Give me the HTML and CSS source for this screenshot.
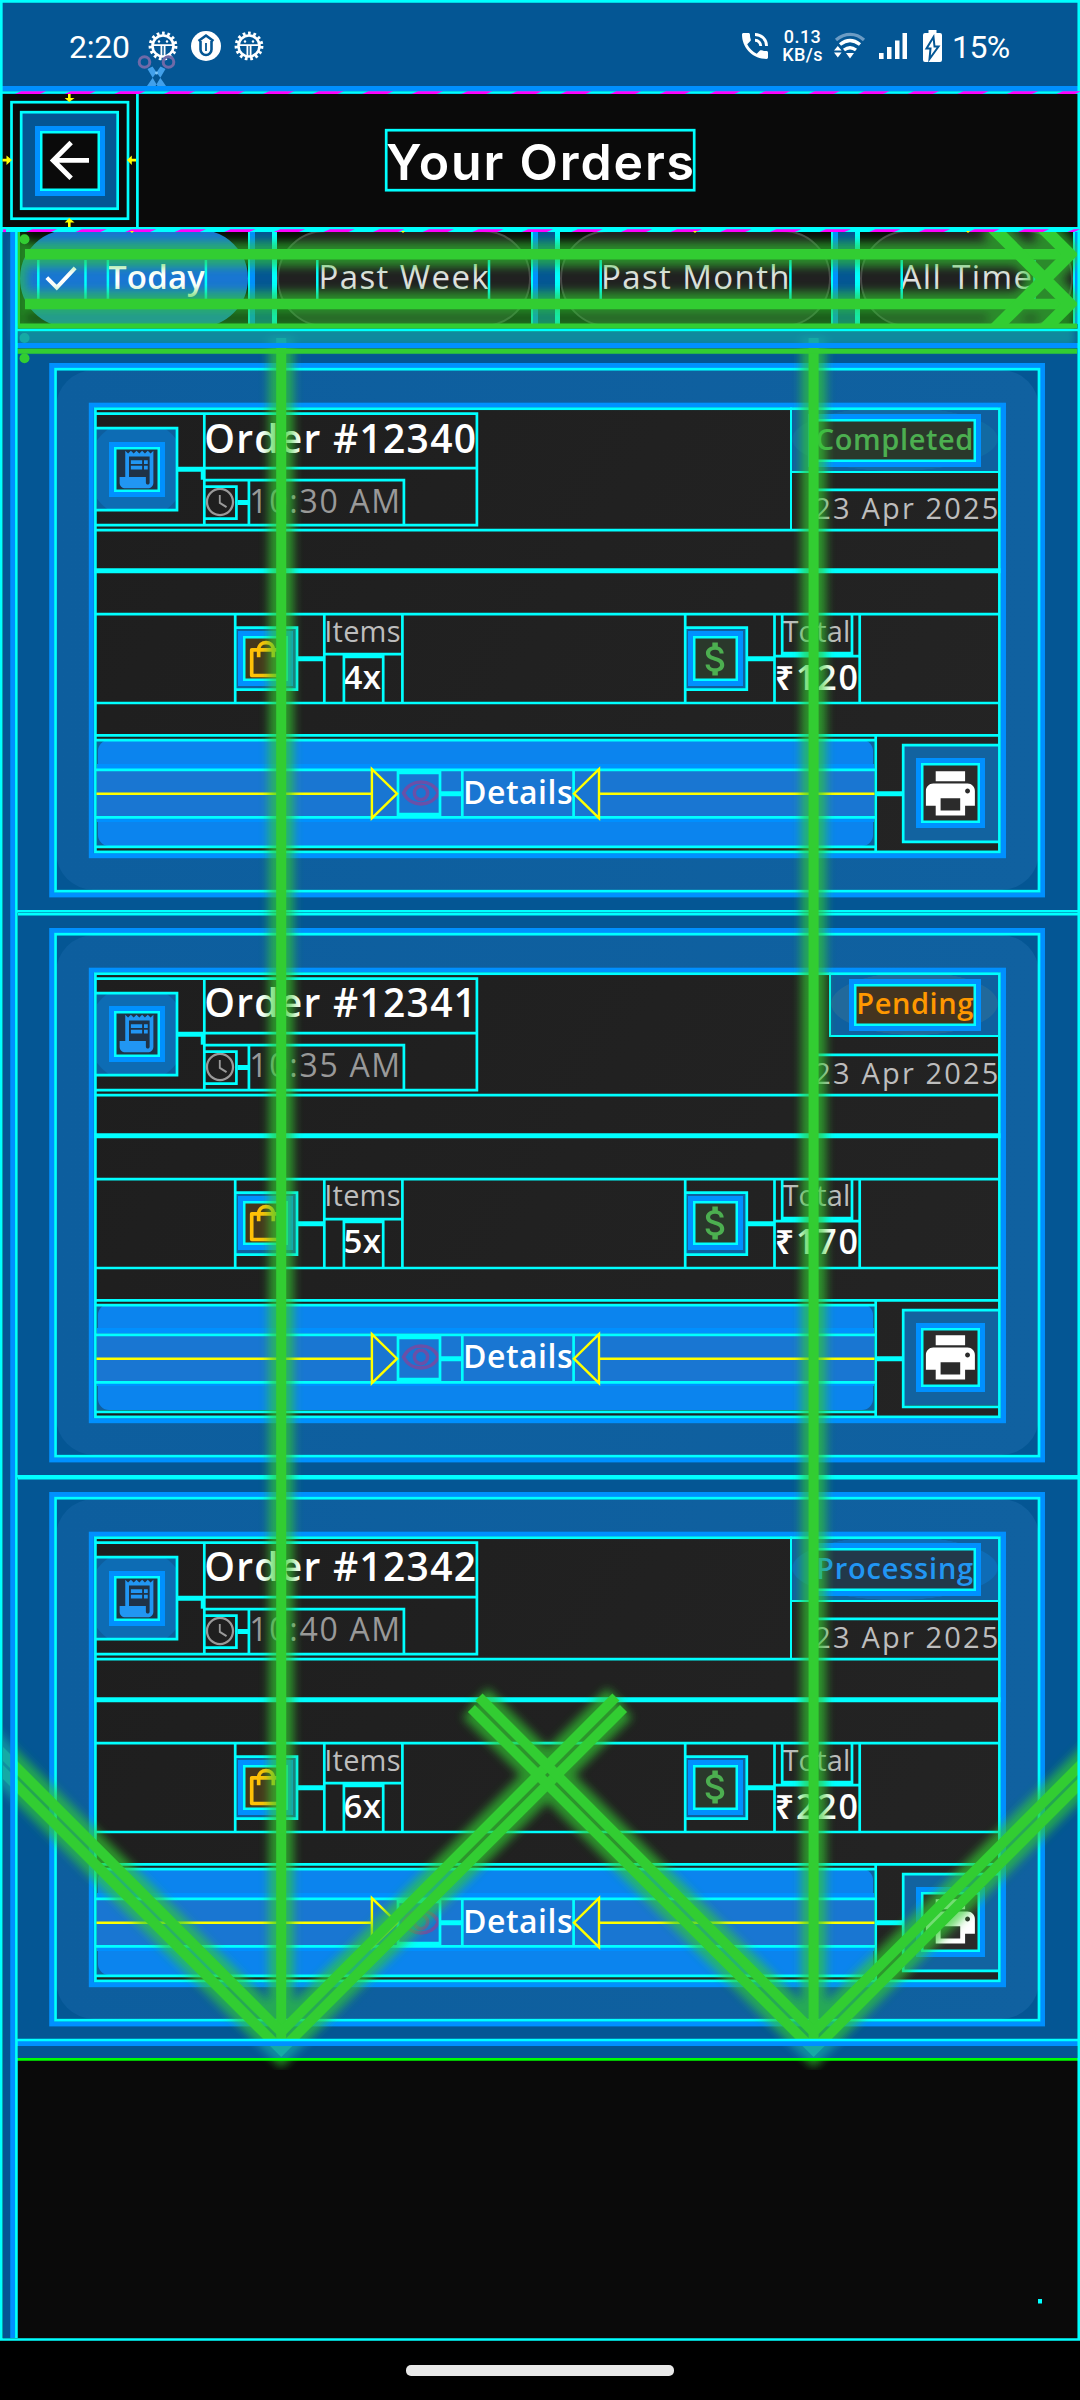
FILE: index.html
```html
<!DOCTYPE html>
<html lang="en">
<head>
<meta charset="utf-8">
<title>Your Orders</title>
<link rel="stylesheet" href="styles.css">
</head>
<body>
<svg class="defs" width="0" height="0">
  <defs>
    <symbol id="i-receipt" viewBox="0 0 24 24"><path fill="#2196f3" d="M19.500 3.500 18 2l-1.500 1.500L15 2l-1.500 1.500L12 2l-1.500 1.500L9 2 7.500 3.500 6 2v14H3v3c0 1.660 1.340 3 3 3h12c1.660 0 3-1.340 3-3V2l-1.500 1.500zM19 19c0 .55-.45 1-1 1s-1-.45-1-1v-3H8V5h11v14z"/><path fill="#2196f3" d="M9 7h6v2H9zM16 7h2v2h-2zM9 10h6v2H9zM16 10h2v2h-2z"/></symbol>
    <symbol id="i-clock" viewBox="0 0 24 24"><path fill="#9a9a9a" d="M11.990 2C6.470 2 2 6.480 2 12s4.470 10 9.990 10C17.520 22 22 17.520 22 12S17.520 2 11.990 2zM12 20.400c-4.640 0-8.400-3.760-8.400-8.400s3.760-8.400 8.400-8.400 8.400 3.760 8.400 8.400-3.760 8.400-8.400 8.400z"/><path fill="#9a9a9a" d="M12.500 7H11.200v6l5.050 3.150.75-1.230-4.500-2.670z"/></symbol>
    <symbol id="i-bag" viewBox="0 0 24 24"><path fill="none" stroke="#ffc107" stroke-width="2" stroke-linejoin="round" d="M4.200 7h15.600v14H4.200z"/><path fill="none" stroke="#ffc107" stroke-width="2" d="M8 11V7c0-5.300 8-5.300 8 0v4"/></symbol>
    <symbol id="i-dollar" viewBox="0 0 24 24"><path fill="#4caf50" d="M11.800 10.900c-2.270-.59-3-1.200-3-2.150 0-1.090 1.010-1.850 2.700-1.850 1.780 0 2.440.85 2.500 2.100h2.210c-.07-1.720-1.120-3.300-3.210-3.810V3h-3v2.160c-1.940.42-3.500 1.680-3.500 3.610 0 2.310 1.910 3.460 4.700 4.130 2.500.6 3 1.480 3 2.410 0 .69-.49 1.790-2.700 1.790-2.060 0-2.870-.92-2.980-2.100h-2.200c.12 2.190 1.760 3.420 3.680 3.830V21h3v-2.150c1.950-.37 3.500-1.500 3.500-3.550 0-2.840-2.430-3.810-4.700-4.400z"/></symbol>
    <symbol id="i-print" viewBox="0 0 24 24"><path fill="#fff" fill-rule="evenodd" d="M19 8H5c-1.660 0-3 1.340-3 3v6h4v4h12v-4h4v-6c0-1.660-1.340-3-3-3zm-3 11H8v-5h8v5zm3-7c-.55 0-1-.45-1-1s.45-1 1-1 1 .45 1 1-.45 1-1 1zm-1-9H6v4h12V3z"/></symbol>
    <symbol id="i-eye" viewBox="0 0 24 24"><path fill="none" stroke="#6a50a8" stroke-width="2" d="M2 12c4-8.300 16-8.300 20 0-4 8.300-16 8.300-20 0z"/><circle cx="12" cy="12" r="3.800" fill="none" stroke="#6a50a8" stroke-width="2"/></symbol>
    <symbol id="i-gear" viewBox="-16 -16 32 32"><circle r="12.600" fill="none" stroke="#fff" stroke-width="3.600" stroke-dasharray="2.650 2.627"/><circle r="10.500" fill="none" stroke="#fff" stroke-width="2.600"/><path d="M-10-.8H10M-1.600 0v10M1.600 0v10" fill="none" stroke="#fff" stroke-width="1.800"/><circle cx="-4" cy="-4.500" r="1.200" fill="#fff"/><circle cx="4" cy="-4.500" r="1.200" fill="#fff"/></symbol>
    <symbol id="card-guides" viewBox="0 348.300 1080 564.400">
      <g fill="none" stroke="#0090ff" stroke-width="5">
        <rect x="51.700" y="365.800" width="990.800" height="529.400"/>
        <rect x="91.300" y="405.500" width="912.200" height="450.500"/>
      </g>
      <g fill="none" stroke="#00ffff" stroke-width="2.700">
        <rect x="55.500" y="369.500" width="983.500" height="522"/>
        <rect x="95.400" y="409" width="904" height="443.200"/>
        <path d="M96 414H476.900V525.500H96M204.300 412.700V525.500M204.300 468.500H476.900M96 530.500H999M204.300 480.500H403.900V525.500M248.900 480.500V525.500M96 428.500H177V510.500H96"/>
        <path d="M204.300 487H236.400V519H204.300M813 490.200H999"/>
        <path d="M96 614.500H999M96 703.300H999M235.200 614.500V703.300M235.200 628H297V690H235.200M324.300 614.500V703.300M402.400 614.500V703.300M343.900 654V703.300M383.200 654V703.300M324.300 654.500H402.400"/>
        <path d="M685.200 614.500V703.300M685.200 628H746.800V690H685.200M774.500 614.500V703.300M859.700 614.500V703.300M782.200 614.500V654.500H852V614.500M774.500 656.500H859.700"/>
        <path d="M96 735.600H999M96 740.500H875.700M875.700 735.600V852M96 847.200H875.700M96 770.200H875.700M96 817.700H875.700M398 770.200V817.700M440 770.200V817.700M462.300 770.200V817.700M573.600 770.200V817.700M999 745.500H903.200V842.200H999"/>
      </g>
      <g fill="none" stroke="#00ffff" stroke-width="5">
        <path d="M178 469.500H203M237.600 502.800H248M94.500 571H1000.500M298 659H323M343 656H384M748 659H774M783 654.500H852M441 794H461.500M877 794H903M17 912.700H1080M398 772H440M398 815.500H440"/>
        <path d="M202 469V480" stroke-width="2.500"/>
      </g>
      <path d="M96.500 794H371.900M371.900 769.500V818.500L397 794ZM599 794H874.500M599 769.500V818.500L574 794Z" fill="none" stroke="#ffff00" stroke-width="2.400"/>
    </symbol>
  </defs>
</svg>

<header class="status">
  <div class="status-left">
    <span class="clock">2:20</span>
    <svg width="32" height="32"><use href="#i-gear"/></svg>
    <svg width="32" height="32" viewBox="-16 -16 32 32"><circle r="15" fill="#fff"/><path d="M-5.500-5V3.500a5.500 5.500 0 0 0 11 0V-5M-7.500-5 0-10.500 7.500-5" fill="none" stroke="#045694" stroke-width="2.600"/><path d="M0-7V5" stroke="#fff" stroke-width="6"/><path d="M0-3V5" stroke="#045694" stroke-width="1.800"/></svg>
    <svg width="32" height="32"><use href="#i-gear"/></svg>
  </div>
  <div class="status-right">
    <svg class="s-phone" width="26" height="26" viewBox="3 3 18 18"><path fill="#fff" d="M20 15.500c-1.250 0-2.450-.2-3.570-.57-.35-.11-.74-.03-1.020.24l-2.200 2.200c-2.830-1.440-5.150-3.750-6.590-6.590l2.200-2.210c.28-.26.36-.65.25-1C8.700 6.450 8.500 5.250 8.500 4c0-.55-.45-1-1-1H4c-.55 0-1 .45-1 1 0 9.390 7.610 17 17 17 .55 0 1-.45 1-1v-3.500c0-.55-.45-1-1-1z"/><path fill="none" stroke="#fff" stroke-width="2" d="M12 4a8 8 0 0 1 8 8M12 8a4 4 0 0 1 4 4"/></svg>
    <div class="speed"><span>0.13</span><span>KB/s</span></div>
    <svg class="s-wifi" width="32" height="28" viewBox="0 0 32 28"><path d="M2 8c9-7.500 20-7.500 28 0" fill="none" stroke="#6b9bc4" stroke-width="3.200"/><path d="M6 12.500c7-5.500 13-5.500 20 0M10 18c4-3 8-3 12 0" fill="none" stroke="#fff" stroke-width="3.400"/><path d="M12 21h8l-4 5.500zM0 18.500h7.600L3.800 14zM0 20.500h7.600L3.800 25.500z" fill="#fff"/></svg>
    <svg class="s-signal" width="28" height="26" viewBox="0 0 28 26"><path d="M0 20h4.600v6H0zM8 14h4.500v12H8zM16 7.500h4.500V26H16zM23.500 0H28v26h-4.500z" fill="#fff"/></svg>
    <svg class="s-batt" width="19" height="32" viewBox="0 0 19 32"><path d="M5.500 0h8v3H17a2 2 0 0 1 2 2v25a2 2 0 0 1-2 2H2a2 2 0 0 1-2-2V5a2 2 0 0 1 2-2h3.500z" fill="#fff"/><path d="M10.500 7 3.500 18.500h4L6.500 29l9-12.500h-4z" fill="#fff" stroke="#045694" stroke-width="2"/></svg>
    <span class="clock percent">15%</span>
  </div>
</header>

<div class="appbar">
  <div class="leading">
    <button class="back" aria-label="Back"><span class="frame back-icon"><svg width="58.800" height="58.800" viewBox="0 0 24 24"><path fill="#fff" d="M20 11H7.830l5.590-5.590L12 4l-8 8 8 8 1.410-1.410L7.830 13H20v-2z"/></svg></span></button>
  </div>
  <h1>Your Orders</h1>
</div>

<nav class="chips">
  <div class="chip-cell c1"><div class="chip active"><svg width="34" height="34" viewBox="0 0 24 24"><path fill="none" stroke="#fff" stroke-width="2.800" d="M2 12.500 9 19.500 22 5.500"/></svg><span>Today</span></div></div>
  <div class="chip-cell c2"><div class="chip"><span>Past Week</span></div></div>
  <div class="chip-cell c3"><div class="chip"><span>Past Month</span></div></div>
  <div class="chip-cell c4"><div class="chip"><span>All Time</span></div></div>
</nav>

<main class="list">
  <section class="item">
    <article class="card"><div class="inner">
      <div class="head">
        <div class="receipt"><span class="frame"><svg width="45" height="45"><use href="#i-receipt"/></svg></span></div>
        <div class="meta"><h2>Order #12340</h2><p class="time"><svg width="34" height="34"><use href="#i-clock"/></svg><span>10:30 AM</span></p></div>
        <div class="side wide"><div class="badge done"><b class="frame"><span>Completed</span></b></div><p class="date">23 Apr 2025</p></div>
      </div>
      <div class="stats">
        <div class="stat items"><span class="tile"><i class="frame bag"><svg width="44" height="44"><use href="#i-bag"/></svg></i></span><div><small>Items</small><strong>4x</strong></div></div>
        <div class="stat total"><span class="tile"><i class="frame cash"><svg width="44" height="44"><use href="#i-dollar"/></svg></i></span><div><small>Total</small><strong>₹120</strong></div></div>
      </div>
      <div class="actions"><button class="details"><span><svg width="42" height="42"><use href="#i-eye"/></svg><em>Details</em></span></button><div class="print"><span class="frame"><svg width="58.800" height="58.800"><use href="#i-print"/></svg></span></div></div>
    </div></article>
    <svg class="guides"><use href="#card-guides"/></svg>
  </section>
  <section class="item">
    <article class="card"><div class="inner">
      <div class="head">
        <div class="receipt"><span class="frame"><svg width="45" height="45"><use href="#i-receipt"/></svg></span></div>
        <div class="meta"><h2>Order #12341</h2><p class="time"><svg width="34" height="34"><use href="#i-clock"/></svg><span>10:35 AM</span></p></div>
        <div class="side"><div class="badge wait"><b class="frame"><span>Pending</span></b></div><p class="date">23 Apr 2025</p></div>
      </div>
      <div class="stats">
        <div class="stat items"><span class="tile"><i class="frame bag"><svg width="44" height="44"><use href="#i-bag"/></svg></i></span><div><small>Items</small><strong>5x</strong></div></div>
        <div class="stat total"><span class="tile"><i class="frame cash"><svg width="44" height="44"><use href="#i-dollar"/></svg></i></span><div><small>Total</small><strong>₹170</strong></div></div>
      </div>
      <div class="actions"><button class="details"><span><svg width="42" height="42"><use href="#i-eye"/></svg><em>Details</em></span></button><div class="print"><span class="frame"><svg width="58.800" height="58.800"><use href="#i-print"/></svg></span></div></div>
    </div></article>
    <svg class="guides"><use href="#card-guides"/></svg>
  </section>
  <section class="item">
    <article class="card"><div class="inner">
      <div class="head">
        <div class="receipt"><span class="frame"><svg width="45" height="45"><use href="#i-receipt"/></svg></span></div>
        <div class="meta"><h2>Order #12342</h2><p class="time"><svg width="34" height="34"><use href="#i-clock"/></svg><span>10:40 AM</span></p></div>
        <div class="side wide"><div class="badge work"><b class="frame"><span>Processing</span></b></div><p class="date">23 Apr 2025</p></div>
      </div>
      <div class="stats">
        <div class="stat items"><span class="tile"><i class="frame bag"><svg width="44" height="44"><use href="#i-bag"/></svg></i></span><div><small>Items</small><strong>6x</strong></div></div>
        <div class="stat total"><span class="tile"><i class="frame cash"><svg width="44" height="44"><use href="#i-dollar"/></svg></i></span><div><small>Total</small><strong>₹220</strong></div></div>
      </div>
      <div class="actions"><button class="details"><span><svg width="42" height="42"><use href="#i-eye"/></svg><em>Details</em></span></button><div class="print"><span class="frame"><svg width="58.800" height="58.800"><use href="#i-print"/></svg></span></div></div>
    </div></article>
    <svg class="guides"><use href="#card-guides"/></svg>
  </section>
</main>
<div class="navbar"><span></span></div>

<svg class="overlay" width="1080" height="2400" viewBox="0 0 1080 2400">
  <defs>
    <filter id="glow" filterUnits="userSpaceOnUse" x="-40" y="190" width="1160" height="1920"><feGaussianBlur stdDeviation="5"/></filter>
    <clipPath id="chip-area"><rect x="3" y="232" width="1074" height="92"/></clipPath>
    <clipPath id="body-area"><rect x="3" y="232" width="1075" height="1838"/></clipPath>
    <g id="axes">
      <path d="M281.200 338V2050M813.600 338V2050"/>
      <path d="M-60 1691 281.200 2032 615.900 1697M-60 1709 281.200 2050 623.500 1708.500"/>
      <path d="M1160 1685.600 813.600 2032 479 1697M1160 1703.600 813.600 2050 471.400 1708.500"/>
    </g>
    <g id="rows">
      <path d="M25 254.300H1068M25 304H1068"/>
      <path d="M1040 225 1069.500 254.300 990 333.800M990 224.800 1069.500 304 1040 333.500"/>
    </g>
  </defs>
  <!-- guides inside the filter chips -->
  <path d="M38.300 260V299M85.500 260V299M107.900 260V299M205.900 260V299M317.300 260V299M489 260V299M600.700 260V299M790.400 260V299M901.700 260V299M1034.500 260V299" fill="none" stroke="#00ffff" stroke-width="2.500"/>
  <!-- scroll direction arrows -->
  <g clip-path="url(#body-area)" fill="none" stroke="#32cd32">
    <g filter="url(#glow)" stroke-width="25" opacity=".68"><use href="#axes"/></g>
    <g filter="url(#glow)" stroke-width="25" opacity=".62"><use href="#rows"/><path d="M18 328H1076M18 340H1076" stroke-width="16"/><path d="M20 236V340" stroke-width="12"/></g>
    <use href="#axes" stroke-width="10"/>
    <g clip-path="url(#chip-area)"><use href="#rows" stroke-width="10.500"/><path d="M1040 225 1069.500 254.300 990 333.800M990 224.800 1069.500 304 1040 333.500" stroke-width="12.500"/></g>
    <path d="M17.500 326H1077M17.500 351.200H1077" stroke-width="5"/>
    <path d="M18.800 232V326" stroke-width="2.500"/>
  </g>
  <g fill="#32cd32"><circle cx="24.500" cy="239.300" r="5"/><circle cx="24.500" cy="338" r="5"/><circle cx="24.500" cy="358.300" r="5"/></g>
  <!-- padding strips -->
  <g fill="#0090ff" fill-opacity=".565"><rect x="3" y="232" width="7" height="2106"/><rect x="17.500" y="331.200" width="1060" height="12"/><rect x="17.500" y="2046" width="1060" height="12"/></g>
  <path d="M12.600 230V2338M17 345.500H1078M17 2043.500H1078M2 88.500H1078" fill="none" stroke="#0090ff" stroke-width="5"/>
  <path d="M17 2059.400H1078" stroke="#00ff00" stroke-width="2.600"/>
  <g fill="none" stroke="#00ffff" stroke-width="2.700">
    <path d="M1.300 1.300H1078.800V2339.500H1.300ZM2 92.500H1078M137.400 94V229M16.400 230V2338M17 330H1078M17 2040H1078"/>
    <rect x="11.500" y="102.200" width="116.500" height="116.500"/>
    <rect x="21.200" y="112.200" width="96.500" height="96.500"/>
    <rect x="386.200" y="130.200" width="308" height="60"/>
    <path d="M2 229.500H1078" stroke-width="5"/>
  </g>
  <rect x="1038" y="2299" width="4" height="4.500" fill="#00ffff"/>
  <g fill="none" stroke="#ff00ff" stroke-width="2.800">
    <path d="M0 0H1060" stroke-dasharray="25 24.600" transform="translate(18 92.600) skewX(-66)"/>
    <path d="M3 230.700H6"/><path d="M0 0H1048" stroke-dasharray="25 24.600" transform="translate(29 230.700) skewX(-66)"/>
  </g>
  <g fill="#ffff00">
    <path d="M68 94h2.600v4h4L69.200 102 64.700 98H68zM68 227h2.600v-4.500h4L69.200 218 64.700 222.500H68z"/>
    <path d="M2.500 158.800v2.600H6.500v3.600L12 160.100 6.500 155.600v3.200zM136 158.800v2.600h-4.200v3.600L127 160.100l4.800-4.500v3.200z"/>
    <path d="M130 231h4l-2 2zM401 231h4l-2 2zM693 231h4l-2 2zM966 231h4l-2 2z"/>
  </g>
  <!-- clip marker -->
  <circle cx="144.500" cy="62" r="5.300" fill="none" stroke="#6f6aa8" stroke-width="3"/><circle cx="168.500" cy="62" r="5.300" fill="none" stroke="#6f6aa8" stroke-width="3"/>
  <path d="M147.500 69 152.500 66.500 166 86H157.500zM165.500 69 160.500 66.500 147 86H155.500z" fill="#42a0ea"/><circle cx="156.500" cy="73" r="1.500" fill="#7cc4f8"/>
</svg>
</body>
</html>
```
FILE: styles.css
```css
* { box-sizing: border-box; margin: 0; padding: 0; }
body { position: relative; width: 1080px; height: 2400px; overflow: hidden; display: flex; flex-direction: column; background: #0a0a0a; color: #fff; font-family: "Open Sans", "Noto Sans", sans-serif; white-space: nowrap; }
button { border: 0; color: inherit; font: inherit; }
svg { display: block; flex: none; }
em, b, i, strong, small { font-style: normal; }
.defs { position: absolute; }

.frame { display: flex; align-items: center; justify-content: center; box-shadow: inset 0 0 0 2.5px #00ffff, 0 0 0 5px #0090ff; }

/* system status bar */
.status { height: 94px; flex: none; background: #045694; display: flex; justify-content: space-between; padding: 0 68px 0 69px; font-family: Roboto, sans-serif; }
.status-left, .status-right { display: flex; align-items: center; height: 91px; }
.status-left { gap: 11px; }
.clock { font-size: 32px; line-height: 40px; padding-top: 3px; letter-spacing: -.2px; }
.status-left .clock { width: 67px; }
.percent { width: 60px; letter-spacing: -.6px; }
.speed { display: flex; flex-direction: column; align-items: center; width: 39px; margin: 0 12px 0 15px; font-size: 18px; line-height: 18px; letter-spacing: .4px; font-weight: 500; }
.s-wifi { margin-right: 13px; }
.s-signal { margin-right: 16px; }
.s-batt { margin-right: 10px; }

/* app bar */
.appbar { height: 138px; flex: none; display: grid; grid-template-columns: 138px 1fr 138px; padding-bottom: 5px; }
.leading { display: flex; align-items: center; padding-left: 20px; }
.back { width: 99px; height: 99px; background: #045694; display: flex; align-items: center; justify-content: center; }
.back-icon { width: 60px; height: 60px; background: #0a0a0a; }
.appbar h1 { display: flex; justify-content: center; align-items: center; padding: 2px 0 0 2px; font: 600 50px/60px Inter, sans-serif; letter-spacing: 1.850px; }

/* filter chips */
.chips { height: 99px; flex: none; display: flex; margin: 0 2px 0 17.500px; overflow: hidden; background: linear-gradient(#045694 92px, #0a0a0a 92px); }
.chip-cell { flex: none; height: 92px; display: flex; align-items: center; background: #0a0a0a; border-left: 2.500px solid #00ffff; border-right: 2.500px solid #00ffff; box-shadow: 5px 0 #0090ff; }
.chip { flex: 1; height: 97px; margin: -3px 0; border-radius: 49px; background: #212121; border: 2px solid #484848; display: flex; align-items: center; justify-content: center; font-size: 33px; line-height: 44px; letter-spacing: 1.400px; color: #e0e0e0; padding: 0 0 3px 1px; }
.chip.active { background: #1976d2; border-color: #1976d2; color: #fff; font-weight: 600; gap: 30px; justify-content: flex-start; padding-left: 22.500px; letter-spacing: .2px; }
.c1 { width: 232px; }
.c2 { width: 261.500px; }
.c3 { width: 278px; }
.c4 { width: 220px; }
.chip-cell + .chip-cell { border-left-width: 5px; margin-left: 22px; }

/* orders */
.list { flex: none; margin: 17.300px 2px 0 17.500px; }
.item { position: relative; height: 564.400px; padding: 22px 39px 0 38.500px; background: #045694; }
.item + .item { box-shadow: inset 0 2.500px #00ffff; }
.guides { position: absolute; left: -17.500px; top: 0; width: 1080px; height: 564.400px; overflow: visible; }
.card { height: 520px; padding: 37px 39px; border-radius: 38px; background: linear-gradient(90deg, #0d5e9e, #1061a0); }
.inner { height: 446px; padding: 0 2px 0 1.500px; display: flex; flex-direction: column; background: linear-gradient(120deg, #1e1e1e, #242424); }

.head { height: 122.800px; display: flex; }
.receipt { width: 80px; height: 83px; margin-top: 20.700px; background: radial-gradient(circle at center, #0d6cb4 49px, #0d5e9e 50px); display: flex; align-items: center; justify-content: center; }
.receipt .frame { width: 46px; height: 45.500px; background: #1f3347; }
.meta { padding: 6.300px 0 0 27.800px; flex: 1; }
.meta h2 { font-size: 39px; font-weight: 600; line-height: 48px; height: 66.600px; letter-spacing: 1.250px; }
.time { display: flex; gap: 12px; font-size: 32px; line-height: 41px; letter-spacing: 1.700px; color: #999; }
.time svg { margin: 5px 0 0 -1px; }
.time span { margin-top: -.5px; }
.side { width: 208px; display: flex; flex-direction: column; align-items: flex-end; }
.side.wide { border-left: 2.500px solid #00ffff; }
.side.wide .badge { width: 100%; border-left: 0; }
.badge { height: 65.500px; display: flex; justify-content: flex-end; padding: 12px 22.500px 0 22.500px; border-bottom: 2.500px solid #00ffff; border-left: 2.500px solid #00ffff; }
.badge .frame { height: 42.500px; padding: 0 1.500px 4px 2.500px; font-size: 29px; font-weight: 600; line-height: 37px; letter-spacing: .6px; }
.badge.done { color: #4caf50; background: radial-gradient(ellipse at center, #126aa2 70%, #0f609f 71%); }
.badge.done .frame { background: #2a382b; }
.badge.wait { color: #ff9800; background: radial-gradient(ellipse at center, #21699b 70%, #0f609f 71%); }
.badge.wait .frame { background: #44341f; }
.badge.work { color: #2196f3; background: radial-gradient(ellipse at center, #0e6cb6 70%, #0f609f 71%); }
.badge.work .frame { background: #22384a; letter-spacing: .8px; }
.date { margin: 16.500px -2.500px 0 0; font-size: 29px; line-height: 37px; letter-spacing: 2.150px; color: #bdbdbd; }

.stats { height: 88.900px; margin-top: 83px; display: grid; grid-template-columns: 450px 1fr; }
.stat { display: flex; padding-left: 139px; }
.stat .tile { width: 60px; height: 62px; margin-top: 14.500px; background: #0f609f; display: flex; align-items: center; justify-content: center; }
.tile .frame { width: 45px; height: 44.500px; }
.tile .bag { background: #46381c; }
.tile .cash { background: #2a382b; }
.stat div { width: 78px; margin-left: 28px; display: flex; flex-direction: column; align-items: center; }
.stat.total div { width: 86px; }
.stat small { font-size: 29px; line-height: 36px; height: 42px; color: #bdbdbd; letter-spacing: .2px; }
.stat strong { font-size: 33px; line-height: 44px; font-weight: 600; letter-spacing: .5px; }
.stat.total strong { font-size: 34px; letter-spacing: 1.800px; margin-right: -1.500px; }

.actions { height: 116px; margin-top: 33px; display: flex; align-items: center; }
.details { width: 779px; height: 106px; background: #0f609f; position: relative; display: flex; align-items: center; }
.details::before { content: ""; position: absolute; inset: 0 1px; border-radius: 11px; background: #0b84ee; }
.details span { position: relative; flex: 1; height: 48px; background: #1976d2; box-shadow: 0 -5px #0090ff, 0 5px #0090ff; display: flex; align-items: center; padding-left: 303px; font-size: 32px; font-weight: 600; line-height: 42px; letter-spacing: .5px; }
.details em { margin: -2px 0 0 21.500px; }
.print { width: 96px; height: 96px; margin-left: 28.500px; background: #1263a0; display: flex; align-items: center; justify-content: center; }
.print .frame { width: 59px; height: 59.700px; background: #2b2b2b; }

.navbar { position: absolute; left: 0; right: 0; bottom: 0; height: 59px; background: #000; display: flex; justify-content: center; padding-top: 24px; }
.navbar span { width: 268px; height: 10.500px; border-radius: 5px; background: #e9e9e9; }
.overlay { position: absolute; left: 0; top: 0; }
```
